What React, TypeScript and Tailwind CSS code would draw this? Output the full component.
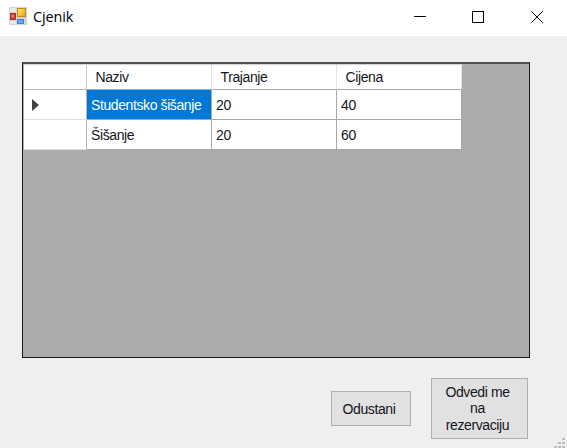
import React from 'react';

const rows = [
  { naziv: 'Studentsko šišanje', trajanje: '20', cijena: '40' },
  { naziv: 'Šišanje', trajanje: '20', cijena: '60' },
];

function AppIcon() {
  return (
    <svg className="ml-[9px] mt-[7px] shrink-0" width="18" height="18" viewBox="0 0 18 18">
      <defs>
        <linearGradient id="gold" x1="0" y1="0" x2="1" y2="1">
          <stop offset="0" stopColor="#ffe685" />
          <stop offset="1" stopColor="#e6a500" />
        </linearGradient>
      </defs>
      <rect width="18" height="18" fill="#d4d4d4" />
      <rect x="1" y="1" width="6" height="4" fill="#e8e8e8" />
      <rect x="1" y="14" width="6" height="3" fill="#e8e8e8" />
      <rect x="1.5" y="6.5" width="5" height="6" fill="#d8453c" stroke="#a92d28" />
      <rect x="2.5" y="8" width="2" height="2" fill="#ef9188" />
      <rect x="8.5" y="1.5" width="8" height="8" fill="url(#gold)" stroke="#c38a12" />
      <rect x="8.5" y="12.5" width="6" height="4" fill="#6aa5f5" stroke="#4380d8" />
    </svg>
  );
}

function TitleBar() {
  return (
    <header className="flex h-9 w-full shrink-0 bg-white">
      <AppIcon />
      <h1 className="ml-[6px] mt-[6px] font-['Open_Sans',sans-serif] text-[14.5px] leading-[22px] tracking-[-0.15px] text-black">Cjenik</h1>
      <div className="ml-auto flex">
        <svg width="153" height="36" viewBox="0 0 153 36" fill="none" stroke="#000">
          <path d="M0 16.5h12" />
          <rect x="58.5" y="11.5" width="11" height="11" />
          <path d="M117.3 11.3l11.4 11.4M128.7 11.3l-11.4 11.4" />
        </svg>
      </div>
    </header>
  );
}

function PriceGrid() {
  return (
    <section className="ml-[22px] mt-[26px] h-[296px] w-[508px] shrink-0 border border-t-2 border-[#1c1c1c] border-t-[#505050] bg-[#ababab] pl-px">
      <div className="grid w-[438px] grid-cols-[63px_125px_125px_125px] grid-rows-[25px_30px_30px] border-t border-[#d4d4d4] text-[14px] leading-[16px] text-[#15151c]">
        <div className="border-b border-r border-[#b4b4b4] border-r-[#c8c8c8] bg-white" />
        {['Naziv', 'Trajanje', 'Cijena'].map((title) => (
          <div key={title} className="border-b border-r border-[#a8a8a8] border-r-[#e4e4e4] bg-white pl-[8.5px] pt-[4px]">{title}</div>
        ))}
        {rows.map((row, i) => (
          <React.Fragment key={row.naziv}>
            <div className="flex items-center border-b border-r border-[#e0e0e0] border-r-[#b4b4b4] bg-white pl-2">
              {i === 0 && (
                <svg width="7" height="12" viewBox="0 0 7 12"><path d="M0 0l7 6-7 6z" fill="#404040" /></svg>
              )}
            </div>
            <div className={i === 0 ? 'whitespace-nowrap border-b border-r border-[#a8a8a8] bg-[#0078d7] pl-[4px] pt-[7px] text-white' : 'border-b border-r border-[#a8a8a8] bg-white pl-[4px] pt-[7px]'}>{row.naziv}</div>
            <div className="border-b border-r border-[#a8a8a8] bg-white pl-[4px] pt-[7px]">{row.trajanje}</div>
            <div className="border-b border-r border-[#a8a8a8] bg-white pl-[4px] pt-[7px]">{row.cijena}</div>
          </React.Fragment>
        ))}
      </div>
    </section>
  );
}

export default function App() {
  return (
    <main className="flex h-[448px] w-[567px] flex-col overflow-hidden bg-[#efefef] font-['Liberation_Sans',sans-serif] tracking-[-0.4px]">
      <TitleBar />
      <PriceGrid />
      <footer className="flex h-[90px] shrink-0 items-start pl-[331px] pt-[20px] text-[14px] text-[#15151c]">
        <button className="mt-[13px] h-[35px] w-[80px] border border-[#afafaf] bg-[#e1e1e1] pr-[4px] leading-[16px]">Odustani</button>
        <button className="ml-[20px] h-[61px] w-[97px] border border-[#afafaf] bg-[#e1e1e1] pr-[4px] leading-[16.5px]">
          Odvedi me<br />na<br />rezervaciju
        </button>
        <svg className="ml-auto mr-[1px] mt-[60px]" width="12" height="10" viewBox="0 0 12 10" fill="#bebebe">
          <path d="M8 0h3v2H8zM4 4h3v2H4zM8 4h3v2H8zM0 8h3v2H0zM4 8h3v2H4zM8 8h3v2H8z" />
        </svg>
      </footer>
    </main>
  );
}
